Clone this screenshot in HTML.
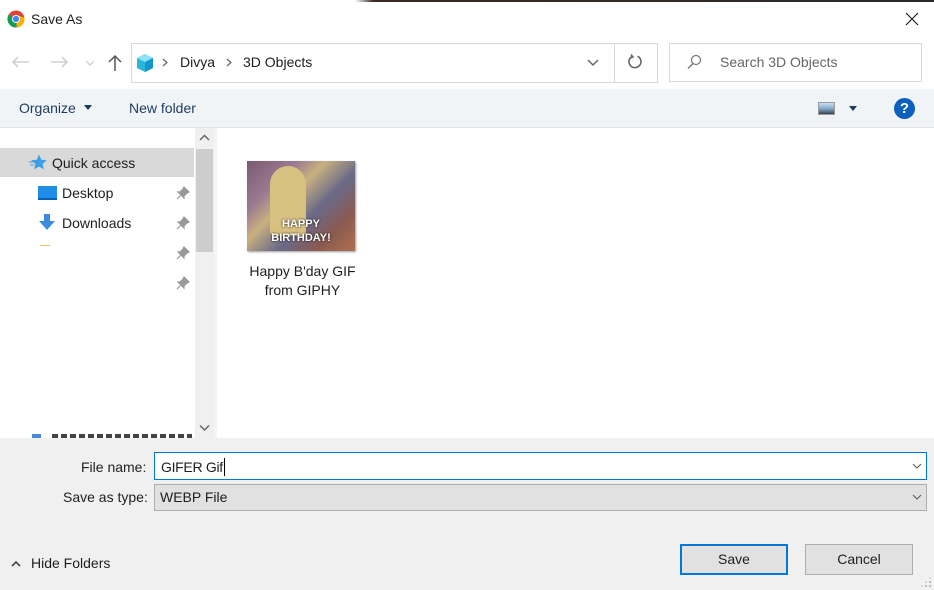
<!DOCTYPE html>
<html><head><style>
*{margin:0;padding:0;box-sizing:border-box}
body{width:934px;height:590px;position:relative;overflow:hidden;background:#fff;font-family:"Liberation Sans",sans-serif;font-size:14px;color:#1e1e1e}
.a{position:absolute}
</style></head><body>
<div class="a" style="left:0;top:0;width:934px;height:2px;background:linear-gradient(90deg,#fff 0,#fff 38%,#3a2a20 40%,#2a2a2a 100%)"></div>
<svg class="a" style="left:7px;top:10px" width="18" height="18" viewBox="0 0 18 18"><circle cx="9" cy="9" r="8.5" fill="#db4437"/><path d="M9 9 L1.6 13.2 A8.5 8.5 0 0 0 9.8 17.5Z" fill="#0f9d58"/><path d="M9 9 L9.8 17.5 A8.5 8.5 0 0 0 17.4 7.5 L9 5Z" fill="#f4b400"/><path d="M9 9 L1.6 13.2 A8.5 8.5 0 0 1 1.6 4.8Z" fill="#0f9d58"/><circle cx="9" cy="9" r="4" fill="#fff"/><circle cx="9" cy="9" r="3.1" fill="#4285f4"/></svg>
<div class="a" style="left:31px;top:11px;font-size:14px">Save As</div>
<svg class="a" style="left:905px;top:12px" width="14" height="14"><path d="M1 1 L13 13 M13 1 L1 13" stroke="#222" stroke-width="1.2"/></svg>
<svg class="a" style="left:12px;top:56px" width="18" height="12"><path d="M1 6 H17 M6 1 L1 6 L6 11" stroke="#c8c8c8" stroke-width="1.3" fill="none"/></svg>
<svg class="a" style="left:50px;top:56px" width="18" height="12"><path d="M1 6 H17 M12 1 L17 6 L12 11" stroke="#c8c8c8" stroke-width="1.3" fill="none"/></svg>
<svg class="a" style="left:85px;top:60px" width="10" height="6"><path d="M1 1 L5 5 L9 1" stroke="#c8c8c8" stroke-width="1.2" fill="none"/></svg>
<svg class="a" style="left:108px;top:54px" width="14" height="18"><path d="M7 17 V2 M1 8 L7 2 L13 8" stroke="#555" stroke-width="1.5" fill="none"/></svg>
<div class="a" style="left:131px;top:43px;width:527px;height:40px;border:1px solid #d9d9d9"></div>
<div class="a" style="left:614px;top:44px;width:1px;height:38px;background:#d9d9d9"></div>
<svg class="a" style="left:135px;top:53px" width="20" height="20" viewBox="0 0 20 20"><path d="M2 5 L10 1 L18 5 L18 15 L10 19 L2 15Z" fill="#2ab6d9"/><path d="M2 5 L10 9 L18 5 L10 1Z" fill="#8ee2f5"/><path d="M10 9 L18 5 L18 15 L10 19Z" fill="#1596c9"/></svg>
<svg class="a" style="left:162px;top:58px" width="6" height="9"><path d="M1 1 L5 4.5 L1 8" stroke="#666" stroke-width="1.2" fill="none"/></svg>
<div class="a" style="left:180px;top:54px;font-size:14px">Divya</div>
<svg class="a" style="left:226px;top:58px" width="6" height="9"><path d="M1 1 L5 4.5 L1 8" stroke="#666" stroke-width="1.2" fill="none"/></svg>
<div class="a" style="left:243px;top:54px;font-size:14px">3D Objects</div>
<svg class="a" style="left:587px;top:59px" width="12" height="8"><path d="M1 1 L6 6 L11 1" stroke="#666" stroke-width="1.5" fill="none"/></svg>
<svg class="a" style="left:627px;top:54px" width="16" height="16" viewBox="0 0 16 16"><path d="M10.5 2.2 A6 6 0 1 1 5.2 2.3" stroke="#666" stroke-width="1.6" fill="none"/><path d="M4 0.5 L6 3 L3 4" stroke="#666" stroke-width="1.5" fill="none"/></svg>
<div class="a" style="left:669px;top:43px;width:253px;height:39px;border:1px solid #d9d9d9"></div>
<svg class="a" style="left:686px;top:54px" width="16" height="16"><circle cx="10" cy="6" r="4.5" stroke="#777" stroke-width="1.2" fill="none"/><path d="M7 9.5 L2 14.5" stroke="#777" stroke-width="1.3"/></svg>
<div class="a" style="left:720px;top:54px;color:#666;font-size:14px">Search 3D Objects</div>
<div class="a" style="left:0;top:89px;width:934px;height:39px;background:#f0f4f7;border-bottom:1px solid #e5e5e5"></div>
<div class="a" style="left:19px;top:100px;color:#1e3a5f;font-size:14px">Organize</div>
<div class="a" style="left:84px;top:105px;border:4px solid transparent;border-top:5px solid #1e3a5f"></div>
<div class="a" style="left:129px;top:100px;color:#1e3a5f;font-size:14px">New folder</div>
<div class="a" style="left:818px;top:102px;width:17px;height:13px;border:1px solid #999;background:linear-gradient(#cde 0,#8ac 50%,#345 100%)"></div>
<div class="a" style="left:849px;top:106px;border:4px solid transparent;border-top:5px solid #1e3a5f"></div>
<div class="a" style="left:894px;top:98px;width:21px;height:21px;border-radius:50%;background:#0a5fbf;color:#fff;font-weight:bold;font-size:15px;text-align:center;line-height:21px">?</div>
<div class="a" style="left:0;top:148px;width:194px;height:29px;background:#d9d9d9"></div>
<svg class="a" style="left:29px;top:154px" width="18" height="17" viewBox="0 0 18 17"><path d="M10 0.5 L12.3 5.8 L17.8 6.2 L13.6 9.9 L14.9 15.5 L10 12.5 L5.1 15.5 L6.4 9.9 L2.2 6.2 L7.7 5.8Z" fill="#3aa0e6"/><path d="M0 8 H4 M1 11 H5" stroke="#3aa0e6"/></svg>
<div class="a" style="left:52px;top:155px;font-size:14px">Quick access</div>
<div class="a" style="left:38px;top:186px;width:19px;height:14px;background:#1e8ee8;border-bottom:2px solid #0a60b0"></div>
<div class="a" style="left:62px;top:185px">Desktop</div>
<svg class="a" style="left:38px;top:213px" width="18" height="18"><path d="M6 1 H12 V8 H17 L9 17 L1 8 H6Z" fill="#3b8be0"/></svg>
<div class="a" style="left:62px;top:215px">Downloads</div>
<div class="a" style="left:40px;top:245px;width:10px;height:1px;background:#f0c060"></div>
<svg class="a" style="left:176px;top:186px" width="14" height="14"><path d="M8 1 L13 6 L11 7 L8 10 L8 12 L2 6 L4 6 L7 3Z M4.5 9.5 L1 13" fill="#999" stroke="#999" stroke-width="1.2"/></svg>
<svg class="a" style="left:176px;top:216px" width="14" height="14"><path d="M8 1 L13 6 L11 7 L8 10 L8 12 L2 6 L4 6 L7 3Z M4.5 9.5 L1 13" fill="#999" stroke="#999" stroke-width="1.2"/></svg>
<svg class="a" style="left:176px;top:246px" width="14" height="14"><path d="M8 1 L13 6 L11 7 L8 10 L8 12 L2 6 L4 6 L7 3Z M4.5 9.5 L1 13" fill="#999" stroke="#999" stroke-width="1.2"/></svg>
<svg class="a" style="left:176px;top:276px" width="14" height="14"><path d="M8 1 L13 6 L11 7 L8 10 L8 12 L2 6 L4 6 L7 3Z M4.5 9.5 L1 13" fill="#999" stroke="#999" stroke-width="1.2"/></svg>
<div class="a" style="left:32px;top:434px;width:9px;height:4px;background:#4a8ad0"></div>
<div class="a" style="left:52px;top:434px;width:140px;height:4px;background:repeating-linear-gradient(90deg,#444 0 6px,transparent 6px 9px)"></div>
<div class="a" style="left:195px;top:128px;width:19px;height:310px;background:#f0f0f0"></div>
<div class="a" style="left:196px;top:149px;width:17px;height:103px;background:#cdcdcd"></div>
<svg class="a" style="left:199px;top:134px" width="11" height="8"><path d="M1 6 L5.5 1.5 L10 6" stroke="#666" stroke-width="1.5" fill="none"/></svg>
<svg class="a" style="left:199px;top:424px" width="11" height="8"><path d="M1 1.5 L5.5 6 L10 1.5" stroke="#666" stroke-width="1.5" fill="none"/></svg>
<div class="a" style="left:214px;top:128px;width:3px;height:310px;background:#f5f5f5"></div>
<div class="a" style="left:247px;top:161px;width:108px;height:90px;background:linear-gradient(135deg,#7a5a70 0,#9a7a90 25%,#c8b080 40%,#6a6a88 60%,#8a5a50 80%,#b07050 100%);box-shadow:1px 1px 2px #999"></div>
<div class="a" style="left:270px;top:166px;width:36px;height:70px;border-radius:18px 18px 4px 4px;background:#d8c080"></div>
<div class="a" style="left:250px;top:217px;width:102px;text-align:center;color:#fff;font-weight:bold;font-size:11px;line-height:14px;text-shadow:0 0 2px #000">HAPPY<br>BIRTHDAY!</div>
<div class="a" style="left:230px;top:262px;width:145px;text-align:center;font-size:14px;line-height:19px">Happy B'day GIF<br>from GIPHY</div>
<div class="a" style="left:0;top:438px;width:934px;height:152px;background:#f0f0f0"></div>
<div class="a" style="left:81px;top:459px">File name:</div>
<div class="a" style="left:154px;top:452px;width:773px;height:28px;background:#fff;border:1px solid #0078d7"></div>
<div class="a" style="left:161px;top:458px;letter-spacing:-0.3px">GIFER Gif<span style="display:inline-block;width:1px;height:18px;background:#000;vertical-align:-4px;margin-left:1px"></span></div>
<svg class="a" style="left:912px;top:463px" width="10" height="7"><path d="M1 1 L5 5 L9 1" stroke="#555" fill="none"/></svg>
<div class="a" style="left:63px;top:489px">Save as type:</div>
<div class="a" style="left:154px;top:484px;width:773px;height:27px;background:#e1e1e1;border:1px solid #adadad"></div>
<div class="a" style="left:160px;top:489px">WEBP File</div>
<svg class="a" style="left:912px;top:494px" width="10" height="7"><path d="M1 1 L5 5 L9 1" stroke="#555" fill="none"/></svg>
<svg class="a" style="left:11px;top:560px" width="10" height="7"><path d="M1 6 L5 2 L9 6" stroke="#333" stroke-width="1.5" fill="none"/></svg>
<div class="a" style="left:31px;top:555px">Hide Folders</div>
<div class="a" style="left:680px;top:544px;width:108px;height:31px;background:#e1e1e1;border:2px solid #0078d7;text-align:center;line-height:27px">Save</div>
<div class="a" style="left:805px;top:544px;width:108px;height:31px;background:#e1e1e1;border:1px solid #adadad;text-align:center;line-height:29px">Cancel</div>
<div class="a" style="left:920px;top:576px;width:12px;height:12px;background:radial-gradient(circle,#bbb 1px,transparent 1.2px) 0 0/4px 4px;clip-path:polygon(100% 0,100% 100%,0 100%)"></div>
</body></html>
